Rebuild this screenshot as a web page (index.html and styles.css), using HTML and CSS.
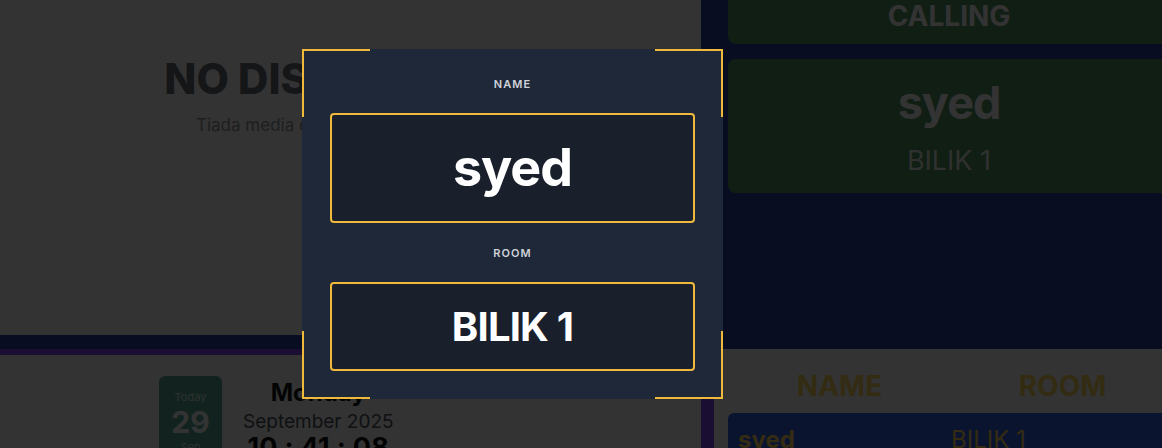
FILE: index.html
```html
<!DOCTYPE html>
<html lang="ms">
<head>
<meta charset="utf-8">
<title>Queue Display</title>
<link rel="stylesheet" href="styles.css">
</head>
<body>
<div class="screen">
  <div class="top">
    <section class="media">
      <h1 class="nodisp">NO DISPLAY</h1>
      <p class="nodisp-sub">Tiada media direkodkan</p>
    </section>
    <section class="calling">
      <div class="card card-head">CALLING</div>
      <div class="card card-now">
        <div class="now-name">syed</div>
        <div class="now-room">BILIK 1</div>
      </div>
    </section>
  </div>
  <div class="bottom">
    <section class="clock-panel">
      <div class="date-card">
        <div class="dc-today">Today</div>
        <div class="dc-day">29</div>
        <div class="dc-mon">Sep</div>
      </div>
      <div class="date-text">
        <div class="dt-day">Monday</div>
        <div class="dt-month">September 2025</div>
        <div class="dt-time">10 : 41 : 08</div>
      </div>
    </section>
    <section class="queue">
      <div class="q-head">
        <div>NAME</div>
        <div>ROOM</div>
      </div>
      <div class="q-row">
        <div class="q-name">syed</div>
        <div class="q-room">BILIK 1</div>
      </div>
    </section>
  </div>
</div>

<div class="overlay">
  <div class="modal">
    <span class="corner c-tl"></span>
    <span class="corner c-tr"></span>
    <span class="corner c-bl"></span>
    <span class="corner c-br"></span>
    <div class="m-label">NAME</div>
    <div class="m-box m-name">syed</div>
    <div class="m-label m-label-room">ROOM</div>
    <div class="m-box m-room">BILIK 1</div>
  </div>
</div>
</body>
</html>
```

FILE: styles.css
```css
* { box-sizing: border-box; }

html, body {
  margin: 0;
  padding: 0;
  height: 448px;
  overflow: hidden;
}

body {
  background: rgb(40, 65, 170);
  font-family: Inter, "Noto Sans", sans-serif;
  color: #111827;
}

.screen {
  width: 1197px;
  display: flex;
  flex-direction: column;
}

.top {
  display: flex;
  height: 349px;
}

.media {
  width: 701px;
  height: 335px;
  background: #ffffff;
  display: flex;
  flex-direction: column;
  align-items: center;
  padding: 55px 117px 0 0;
}

.nodisp {
  margin: 0;
  font-size: 42px;
  line-height: 48px;
  font-weight: 800;
  color: rgb(108, 113, 122);
  white-space: nowrap;
}

.nodisp-sub {
  margin: 12px 0 0;
  font-size: 17px;
  line-height: 20px;
  color: rgb(150, 152, 158);
  white-space: nowrap;
}

.calling {
  width: 496px;
  padding: 0 27px;
  display: flex;
  flex-direction: column;
  gap: 15px;
}

.card {
  background: rgb(85, 150, 100);
  border-radius: 8px;
  color: #ffffff;
  text-align: center;
}

.card-head {
  margin-top: -12px;
  padding: 11px 0;
  font-size: 28px;
  line-height: 34px;
  font-weight: 700;
}

.card-now {
  padding: 15px 0 15px;
  display: flex;
  flex-direction: column;
  gap: 13px;
}

.now-name {
  font-size: 45px;
  line-height: 57px;
  font-weight: 700;
  letter-spacing: -1px;
}

.now-room {
  font-size: 27px;
  line-height: 34px;
  font-weight: 400;
  color: rgba(255, 255, 255, 0.9);
}

.bottom {
  display: flex;
  height: 99px;
}

.clock-panel {
  width: 714px;
  background: #ffffff;
  border-top: 6px solid rgb(130, 75, 250);
  border-right: 13px solid rgb(130, 75, 250);
  display: flex;
  align-items: flex-start;
  gap: 21px;
  padding: 21px 0 0 159px;
}

.date-card {
  width: 63px;
  height: 90px;
  background: rgb(90, 175, 155);
  border-radius: 6px;
  padding-top: 14px;
  display: flex;
  flex-direction: column;
  align-items: center;
  color: #ffffff;
}

.dc-today {
  font-size: 11px;
  line-height: 14px;
  color: rgba(255, 255, 255, 0.8);
}

.dc-day {
  font-size: 30px;
  line-height: 36px;
  font-weight: 700;
}

.dc-mon {
  font-size: 11px;
  line-height: 14px;
  color: rgba(255, 255, 255, 0.8);
}

.date-text {
  display: flex;
  flex-direction: column;
  align-items: center;
  padding-top: 2px;
}

.dt-day {
  font-size: 24px;
  line-height: 29px;
  font-weight: 700;
  color: #0f1115;
}

.dt-month {
  margin-top: 3px;
  font-size: 19px;
  line-height: 23px;
  color: #4b5563;
}

.dt-time {
  font-size: 27px;
  line-height: 30px;
  font-weight: 700;
  letter-spacing: 0.3px;
  color: #0f1115;
}

.queue {
  flex: 1;
  background: #ffffff;
  padding: 0 23px 0 14px;
}

.q-head {
  display: grid;
  grid-template-columns: 1fr 1fr;
  padding: 20px 0 10px;
  text-align: center;
  font-size: 28px;
  line-height: 34px;
  font-weight: 700;
  color: rgb(255, 215, 90);
}

.q-row {
  display: grid;
  grid-template-columns: 1fr 1fr;
  background: rgb(50, 100, 235);
  border-radius: 6px;
  padding: 12px 10px;
  font-size: 24px;
  line-height: 29px;
  color: rgb(255, 215, 90);
}

.q-name { font-weight: 700; }
.q-room { font-weight: 400; }

/* modal overlay */
.overlay {
  position: fixed;
  inset: 0;
  background: rgba(0, 0, 0, 0.8);
  display: flex;
  align-items: center;
  justify-content: flex-start;
  padding-left: 302px;
}

.modal {
  position: relative;
  width: 421px;
  height: 350px;
  background: #1f2839;
  padding: 27px 28px 28px;
  display: flex;
  flex-direction: column;
}

.corner {
  position: absolute;
  width: 68px;
  height: 68px;
  border: 0 solid #efb93c;
}
.c-tl { top: 0; left: 0; border-top-width: 2px; border-left-width: 2px; }
.c-tr { top: 0; right: 0; border-top-width: 2px; border-right-width: 2px; }
.c-bl { bottom: 0; left: 0; border-bottom-width: 2px; border-left-width: 2px; }
.c-br { bottom: 0; right: 0; border-bottom-width: 2px; border-right-width: 2px; }

.m-label {
  text-align: center;
  font-size: 11px;
  line-height: 16px;
  font-weight: 600;
  letter-spacing: 1.1px;
  color: #cfd3da;
  margin-bottom: 21px;
}

.m-label-room { margin-top: 22px; }

.m-box {
  border: 2px solid #efb93c;
  border-radius: 4px;
  background: #1a1f2c;
  color: #ffffff;
  text-align: center;
  font-weight: 700;
  padding: 20px 0;
}

.m-name {
  font-size: 52px;
  line-height: 66px;
  letter-spacing: -1px;
}

.m-room {
  font-size: 40px;
  line-height: 45px;
  letter-spacing: -0.8px;
}
```
